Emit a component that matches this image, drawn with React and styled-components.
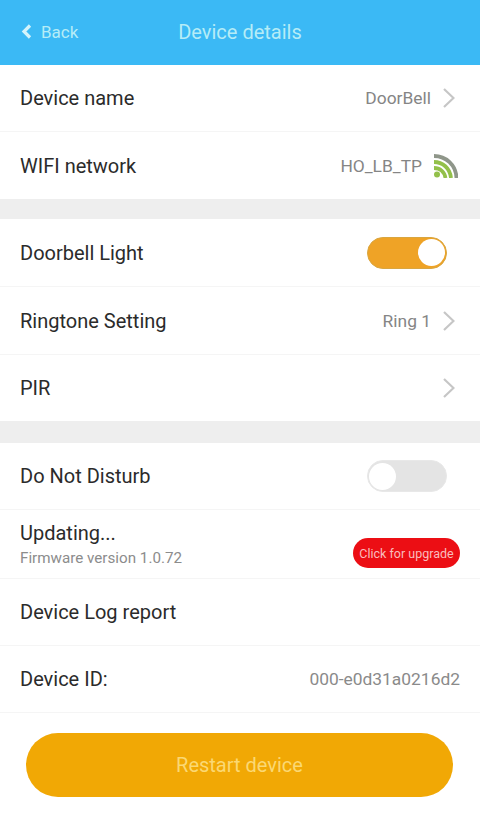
import React from 'react'
import styled, { createGlobalStyle } from 'styled-components'

const GlobalStyle = createGlobalStyle`
  html, body { margin: 0; padding: 0; background: #fff; }
  body { font-family: Roboto, "Liberation Sans", sans-serif; }
`

const Page = styled.div`
  width: 480px;
  height: 823px;
  background: #fff;
  overflow: hidden;
`

const Header = styled.header`
  height: 65px;
  box-sizing: border-box;
  padding-bottom: 2px;
  background: #3bb9f5;
  display: grid;
  grid-template-columns: 1fr auto 1fr;
  align-items: center;
  color: #b5ecf7;
`

const BackLink = styled.a`
  display: flex;
  align-items: center;
  gap: 9px;
  padding-left: 21px;
  font-size: 17px;
  svg { display: block; }
`

const Title = styled.h1`
  margin: 0;
  font-size: 20px;
  font-weight: 400;
`

const Group = styled.section`
  background: #fff;
`

const Gap = styled.div`
  height: ${p => p.$h}px;
  background: #eeeeee;
`

const Row = styled.div`
  height: ${p => p.$h || 67}px;
  box-sizing: border-box;
  padding: 0 20px;
  display: flex;
  align-items: center;
  justify-content: space-between;
  border-bottom: ${p => (p.$last ? 'none' : '1px solid #f5f5f5')};
`

const Label = styled.span`
  font-size: 20px;
  color: #2b2b2b;
`

const Right = styled.div`
  display: flex;
  align-items: center;
  gap: ${p => p.$gap ?? 12}px;
  margin-right: ${p => p.$end ?? 5}px;
  color: #858585;
  font-size: 17.4px;
  svg { display: block; }
`

const Stack = styled.div`
  display: flex;
  flex-direction: column;
  gap: 4px;
`

const Sub = styled.span`
  font-size: 15.2px;
  color: #8c8c8c;
`

const Toggle = styled.div`
  width: 80px;
  height: 32px;
  box-sizing: border-box;
  margin-right: 13px;
  border-radius: 16px;
  padding: 0 1px;
  display: flex;
  align-items: center;
  justify-content: ${p => (p.$on ? 'flex-end' : 'flex-start')};
  background: ${p => (p.$on ? '#efa326' : '#e4e4e4')};
  border: 1px solid ${p => (p.$on ? '#d9a640' : '#e8e8e8')};
`

const Knob = styled.div`
  width: 27px;
  height: 27px;
  border-radius: 50%;
  background: #fff;
`

const Badge = styled.div`
  width: 107px;
  height: 30px;
  margin-top: 18px;
  border-radius: 15px;
  background: #ec0e14;
  color: #f9bdbd;
  font-size: 12.5px;
  display: flex;
  align-items: center;
  justify-content: center;
`

const Value = styled.span`
  font-size: 17.4px;
  color: #8a8a8a;
`

const ButtonWrap = styled.div`
  padding: 20px 27px 0 26px;
`

const RestartButton = styled.button`
  width: 100%;
  height: 64px;
  border: none;
  border-radius: 32px;
  background: #f1a805;
  color: #fbd873;
  font-family: inherit;
  font-size: 20px;
  display: block;
`

const Chevron = () => (
  <svg width="12" height="20" viewBox="0 0 12 20" fill="none" stroke="#c6c6c6" strokeWidth="2.2">
    <path d="M1 1l9.500 9L1 19" />
  </svg>
)

const BackIcon = () => (
  <svg width="11" height="15" viewBox="0 0 11 15" fill="none" stroke="#d4f3fb" strokeWidth="3.2">
    <path d="M9 1.500L3 7.500l6 6" />
  </svg>
)

const WifiIcon = () => (
  <svg width="25" height="24" viewBox="0 0 25 24" fill="none" strokeWidth="3.800">
    <path d="M1 2C13 2 23 11 23.500 24" stroke="#8f968a" />
    <path d="M1 8C9.500 8 17 14 18 24" stroke="#93c04a" />
    <path d="M1 14C7 14 11.500 18 12.500 24" stroke="#93c04a" />
    <circle cx="4" cy="20.500" r="3" fill="#93c04a" stroke="none" />
  </svg>
)

const App = () => {
  return (
    <Page>
      <GlobalStyle />
      <Header>
        <BackLink><BackIcon />Back</BackLink>
        <Title>Device details</Title>
      </Header>
      <Group>
        <Row>
          <Label>Device name</Label>
          <Right><span>DoorBell</span><Chevron /></Right>
        </Row>
        <Row $last>
          <Label>WIFI network</Label>
          <Right $gap={11} $end={2}><span>HO_LB_TP</span><WifiIcon /></Right>
        </Row>
      </Group>
      <Gap $h={20} />
      <Group>
        <Row $h={68}>
          <Label>Doorbell Light</Label>
          <Toggle $on><Knob /></Toggle>
        </Row>
        <Row $h={68}>
          <Label>Ringtone Setting</Label>
          <Right><span>Ring 1</span><Chevron /></Right>
        </Row>
        <Row $h={66} $last>
          <Label>PIR</Label>
          <Right><Chevron /></Right>
        </Row>
      </Group>
      <Gap $h={22} />
      <Group>
        <Row>
          <Label>Do Not Disturb</Label>
          <Toggle><Knob /></Toggle>
        </Row>
        <Row $h={69}>
          <Stack>
            <Label>Updating...</Label>
            <Sub>Firmware version 1.0.72</Sub>
          </Stack>
          <Badge>Click for upgrade</Badge>
        </Row>
        <Row>
          <Label>Device Log report</Label>
        </Row>
        <Row>
          <Label>Device ID:</Label>
          <Value>000-e0d31a0216d2</Value>
        </Row>
      </Group>
      <ButtonWrap>
        <RestartButton>Restart device</RestartButton>
      </ButtonWrap>
    </Page>
  )
}

export default App
